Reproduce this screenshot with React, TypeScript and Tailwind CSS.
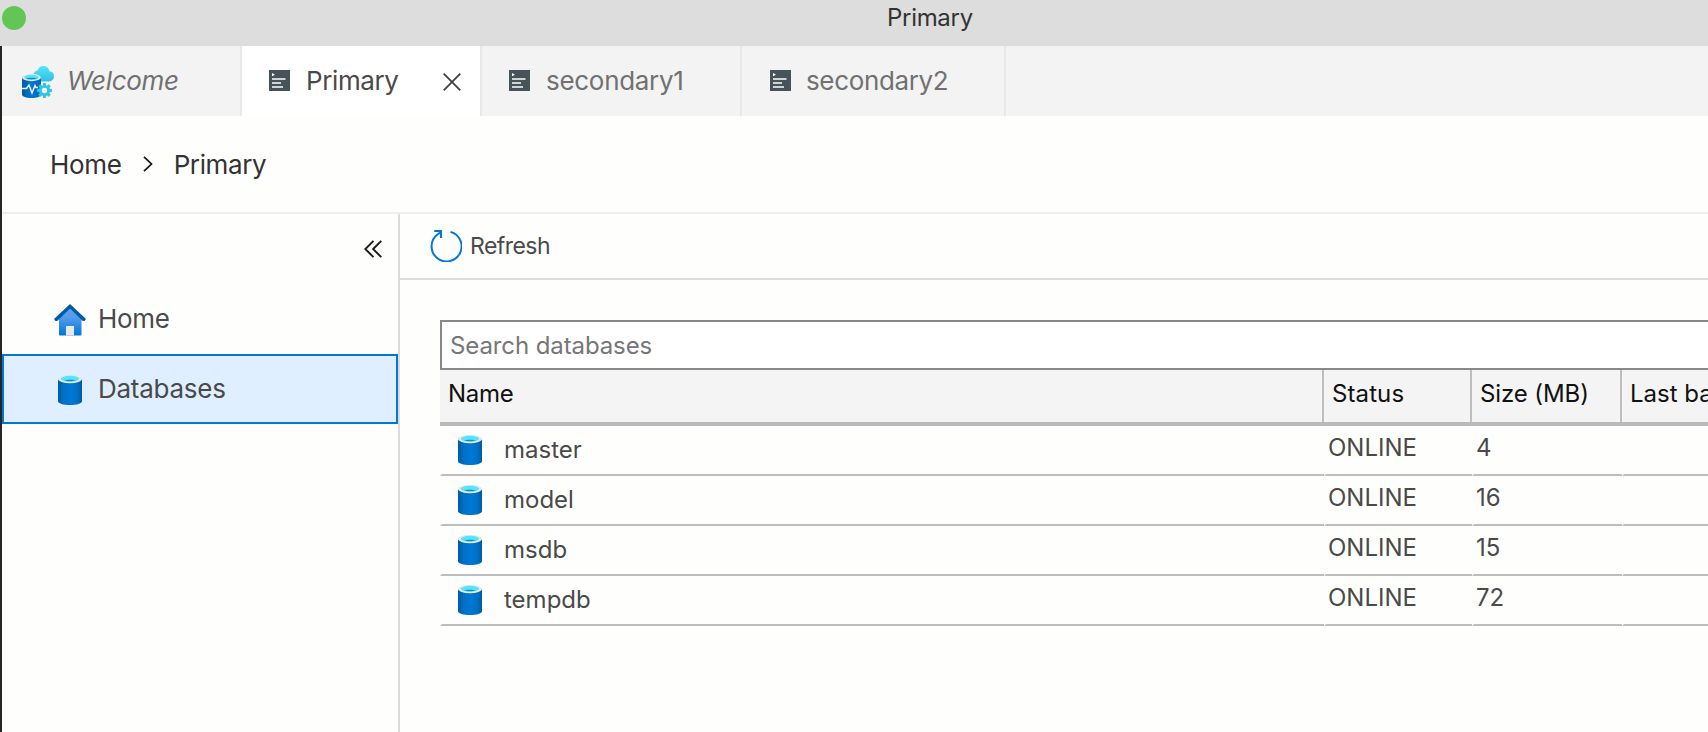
import React from "react";

const gearTeeth = [0, 45, 90, 135, 180, 225, 270, 315];

const WelcomeIcon = () => (
  <svg className="h-8 w-8 shrink-0" viewBox="0 0 32 32">
    <defs>
      <linearGradient id="wCloud" x1="0" y1="0" x2="0" y2="1">
        <stop offset="0" stopColor="#50e6ff" />
        <stop offset="1" stopColor="#32bedd" />
      </linearGradient>
      <linearGradient id="wBody" x1="0" y1="0" x2="1" y2="0">
        <stop offset="0" stopColor="#005ba1" />
        <stop offset="0.5" stopColor="#0078d4" />
        <stop offset="1" stopColor="#0067b8" />
      </linearGradient>
    </defs>
    <path d="M16 15.500h11a5 5 0 0 0 5-5 5.200 5.200 0 0 0-4.600-5.200A6.300 6.300 0 0 0 21.500 0a6.200 6.200 0 0 0-5.800 4.200A5.500 5.500 0 0 0 11.500 8Z" fill="url(#wCloud)" />
    <path d="M0 11v17.500C0 30.500 4.300 32 9.500 32S19 30.500 19 28.500V11Z" fill="url(#wBody)" />
    <ellipse cx="9.500" cy="11.500" rx="9.500" ry="3.700" fill="#e8e8e8" />
    <ellipse cx="9.500" cy="11.200" rx="7.300" ry="2.400" fill="#50e6ff" />
    <path d="M4 12.600c2-1.300 9-1.300 11 0-2.500 1.200-8.500 1.200-11 0Z" fill="#198ab3" />
    <path d="M0 22.500h4.500l2.500-3.500 3 8 3-7.500 1 2h2" fill="none" stroke="#f2f2f2" strokeWidth="1.500" />
    <g fill="#32c5e6">
      {gearTeeth.map((angle) => (
        <rect key={angle} x="21" y="17" width="3" height="4" rx="0.500" transform={`rotate(${angle} 22.5 24.500)`} />
      ))}
      <circle cx="22.500" cy="24.500" r="5.600" />
    </g>
    <circle cx="22.500" cy="24.500" r="2.700" fill="#f3f3f3" />
  </svg>
);

const ServerIcon = () => (
  <svg className="mb-[1px] h-[21px] w-[21px] shrink-0" viewBox="0 0 21 21">
    <rect width="21" height="21" fill="#465359" />
    <path d="M3 3l3 1.700L3 6.300Z" fill="#fff" />
    <path d="M3 9h13.500M3 13h9M3 17h11" stroke="#fff" strokeWidth="1.300" />
  </svg>
);

const DatabaseIcon = () => (
  <svg className="h-[30px] w-6 shrink-0" viewBox="0 0 24 30">
    <defs>
      <linearGradient id="dbBody" x1="0" y1="0" x2="1" y2="0">
        <stop offset="0" stopColor="#005ba1" />
        <stop offset="0.250" stopColor="#0071c8" />
        <stop offset="0.550" stopColor="#0078d4" />
        <stop offset="0.800" stopColor="#006fc4" />
        <stop offset="1" stopColor="#005ba1" />
      </linearGradient>
    </defs>
    <path d="M0 4v22.200C0 28.300 5.300 30 12 30s12-1.700 12-3.800V4Z" fill="url(#dbBody)" />
    <ellipse cx="12" cy="4" rx="12" ry="4.200" fill="#e8e8e8" />
    <ellipse cx="12" cy="3.700" rx="9.200" ry="2.900" fill="#50e6ff" />
    <path d="M6 5.500C8.500 4.500 15.500 4.500 18 5.500 15 6.600 9 6.600 6 5.500Z" fill="#198ab3" />
  </svg>
);

const HomeIcon = () => (
  <svg className="h-8 w-8 shrink-0" viewBox="0 0 32 32">
    <defs>
      <linearGradient id="homeBody" x1="0" y1="0" x2="0" y2="1">
        <stop offset="0" stopColor="#5ea0ef" />
        <stop offset="0.350" stopColor="#559cec" />
        <stop offset="1" stopColor="#0078d4" />
      </linearGradient>
    </defs>
    <path d="M5 14 16 3l11.500 11v16.500a1 1 0 0 1-1 1H6a1 1 0 0 1-1-1Z" fill="url(#homeBody)" />
    <path d="M16 0 32 15l-1.500 2h-1.700L16 4.500 3.200 17H1.500L0 15Z" fill="#005ba1" />
    <path d="M12 22h8v9.500h-8Z" fill="#e8e8e8" />
  </svg>
);

const RefreshIcon = () => (
  <svg className="h-8 w-8 shrink-0" viewBox="0 0 32 32" fill="none" stroke="#0078d4" strokeWidth="2">
    <path d="M20.500 1.900A15 15 0 1 1 7.700 4.300L11 2" />
    <path d="M4.200 1H11v7" />
  </svg>
);

const tabs = [
  { label: "secondary1", width: "w-[260px] pl-[27px]", text: "ml-[16px] tracking-[-0.3px]" },
  { label: "secondary2", width: "w-[264px] pl-[28px]", text: "ml-[15px] tracking-[-0.35px]" },
];

const rows = [
  { name: "master", size: "4" },
  { name: "model", size: "16" },
  { name: "msdb", size: "15" },
  { name: "tempdb", size: "72" },
];

const columns = "grid grid-cols-[884px_148px_150px_86px]";

const Cell = ({ children }: { children?: React.ReactNode }) => (
  <div className="h-[50px] border-b-2 border-l-2 border-b-[#bebebe] border-l-transparent pl-[2px] text-[24px] leading-[44px]">
    {children}
  </div>
);

export default function App() {
  return (
    <div className="flex h-[732px] w-[1708px] flex-col overflow-hidden bg-[#fefefd] font-[Inter,sans-serif] text-[#4a4a4a]">
      <header className="flex h-[46px] shrink-0 bg-[#dddddd]">
        <div className="mt-[6px] ml-[2px] h-6 w-6 rounded-full bg-[#62c655]" />
        <div className="ml-[861px] text-[24px] leading-[36px] tracking-[-0.3px] text-[#333]">Primary</div>
      </header>

      <div className="flex min-h-0 flex-1 flex-col border-l-2 border-[#252526]">
        <nav className="flex h-[70px] shrink-0 bg-[#f3f3f3] text-[26px] leading-[70px] text-[#717171]">
          <div className="flex w-[240px] items-center border-r-2 border-[#e8e8e8] pl-5">
            <span className="pt-[2px]"><WelcomeIcon /></span>
            <span className="ml-[13px] tracking-[-0.3px] italic">Welcome</span>
          </div>
          <div className="flex w-[240px] items-center border-r-2 border-[#e8e8e8] bg-white pl-[27px] text-[#4a4a4a]">
            <ServerIcon />
            <span className="ml-[16px] tracking-[-0.4px]">Primary</span>
            <svg className="mt-[2px] ml-[45px] h-[18px] w-[18px]" viewBox="0 0 18 18" stroke="#424242" strokeWidth="1.800">
              <path d="M.7.7l16.600 16.600M17.300.7.7 17.300" />
            </svg>
          </div>
          {tabs.map((t) => (
            <div key={t.label} className={`flex items-center border-r-2 border-[#e8e8e8] ${t.width}`}>
              <ServerIcon />
              <span className={t.text}>{t.label}</span>
            </div>
          ))}
        </nav>

        <div className="flex h-[98px] shrink-0 items-center border-b-2 border-[#eeeeee] pl-[48px] text-[26px] text-[#333]">
          <span className="tracking-[-0.3px]">Home</span>
          <svg className="ml-[21px] h-[16px] w-[10px]" viewBox="0 0 10 16" fill="none" stroke="#111" strokeWidth="1.700">
            <path d="M1 .8 8.500 8 1 15.200" />
          </svg>
          <span className="ml-[21px] tracking-[-0.4px]">Primary</span>
        </div>

        <div className="flex min-h-0 flex-1">
          <aside className="flex w-[398px] shrink-0 flex-col border-r-2 border-[#dcdcdc]">
            <div className="flex h-[70px] justify-end pt-[26px] pr-4">
              <svg className="h-[18px] w-[18px]" viewBox="0 0 18 18" fill="none" stroke="#1a1a1a" strokeWidth="1.900">
                <path d="M9.500.8 1.300 9l8.200 8.200M17.300.8 9.100 9l8.200 8.200" />
              </svg>
            </div>
            <div className="flex h-[70px] items-center pl-[52px] text-[26px]">
              <span className="pt-[2px]"><HomeIcon /></span>
              <span className="ml-[12px] pb-[1px] tracking-[-0.35px]">Home</span>
            </div>
            <div className="flex h-[70px] items-center border-2 border-[#0078d4] bg-[#e0efff] pl-[54px] text-[26px]">
              <span className="pt-[2px]"><DatabaseIcon /></span>
              <span className="ml-[16px] pb-[2px] tracking-[-0.25px]">Databases</span>
            </div>
          </aside>

          <main className="flex min-w-0 flex-1 flex-col">
            <div className="flex h-[66px] shrink-0 items-center border-b-2 border-[#dcdcdc] pl-[30px] text-[23px]">
              <RefreshIcon />
              <span className="ml-[8px] tracking-[-0.55px]">Refresh</span>
            </div>
            <div className="mt-10 ml-10 w-[1268px] shrink-0">
              <div className="h-[50px] border-2 border-r-0 border-[#888] bg-white pl-[8px] text-[24px] leading-[48px] tracking-[-0.1px] text-[#767676]">
                Search databases
              </div>
              <div className={`${columns} h-14 border-b-4 border-[#b9b9b9] bg-[#f4f4f4] text-[24px] leading-[48px] text-[#111]`}>
                <div className="border-r-2 border-[#bebebe] pl-[8px] tracking-[-0.3px]">Name</div>
                <div className="border-r-2 border-[#bebebe] pl-[8px] tracking-[0.1px]">Status</div>
                <div className="border-r-2 border-[#bebebe] pl-[8px] tracking-[-0.1px]">Size (MB)</div>
                <div className="overflow-hidden pl-[8px] whitespace-nowrap">Last backup</div>
              </div>
              {rows.map((r) => (
                <div key={r.name} className={columns}>
                  <Cell>
                    <div className="flex h-12 items-center pl-[14px]">
                      <DatabaseIcon />
                      <span className="ml-[22px]">{r.name}</span>
                    </div>
                  </Cell>
                  <Cell>ONLINE</Cell>
                  <Cell>{r.size}</Cell>
                  <Cell />
                </div>
              ))}
            </div>
          </main>
        </div>
      </div>
    </div>
  );
}
